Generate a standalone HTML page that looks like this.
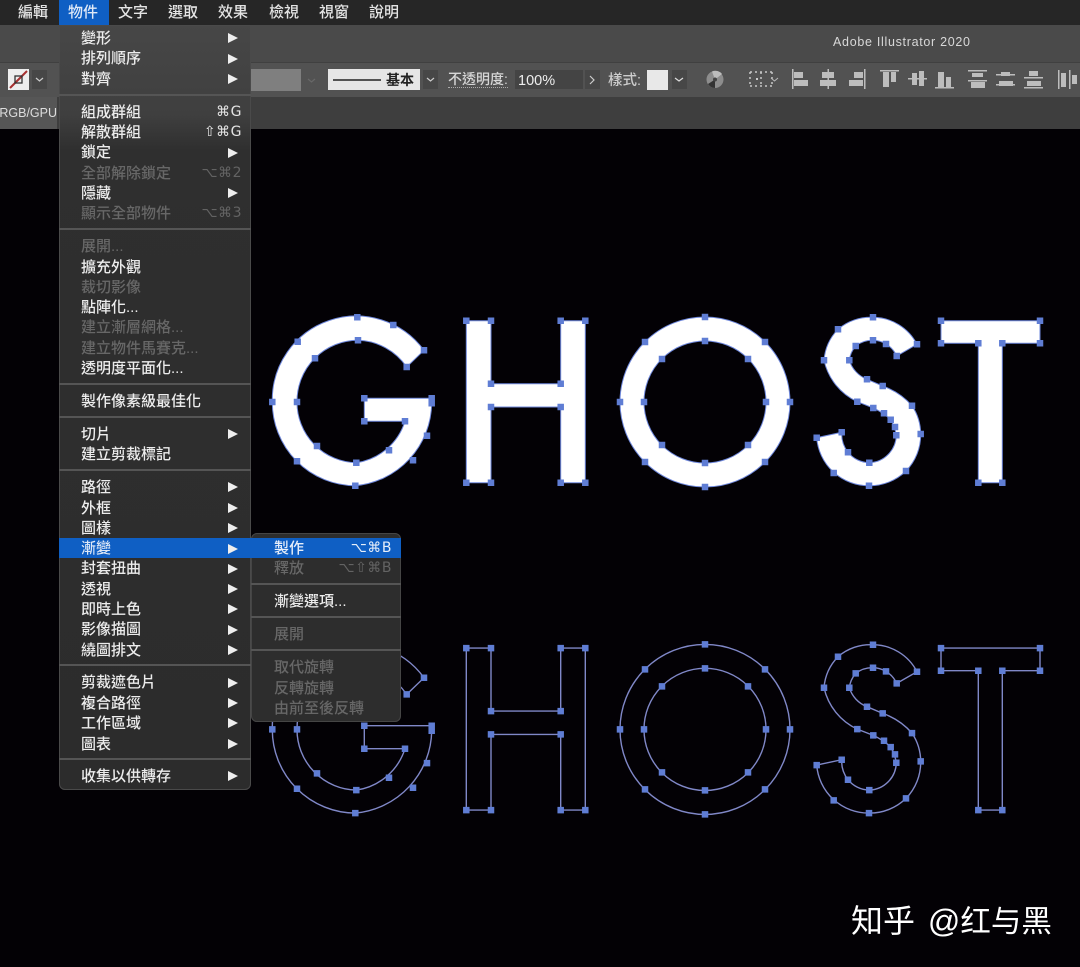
<!DOCTYPE html>
<html lang="zh-Hant"><head><meta charset="utf-8"><title>Adobe Illustrator 2020</title>
<style>
html,body{margin:0;padding:0;background:#030105}
#p{position:relative;width:1080px;height:967px;overflow:hidden;background:#030105;font-family:"Liberation Sans","Noto Sans CJK TC",sans-serif;color:#eee}
#p div{position:absolute}
.m{top:3px;height:20px;line-height:20px;font-size:15px;color:#e4e4e4;white-space:nowrap;font-weight:500}
.r{left:22px;height:20px;line-height:20px;font-size:15px;color:#ececec;white-space:nowrap;font-weight:500;margin-top:1.5px}
.d{color:#676767}
.s{right:9px;height:20px;line-height:20px;font-size:14px;color:#e4e4e4;white-space:nowrap;font-family:"DejaVu Sans","Liberation Sans",sans-serif;letter-spacing:.5px;margin-top:1px}
.sd{color:#636363}
.a{left:169px;width:0;height:0;border-left:10px solid #eee;border-top:5px solid transparent;border-bottom:5px solid transparent;margin-top:1px}
.l{left:0;right:0;height:2px;background:#555}
</style></head><body><div id="p">

<div style="left:0;top:0;width:1080px;height:25px;background:#262626"></div>
<div style="left:0;top:25px;width:1080px;height:37px;background:#4a4a4a"></div>
<div style="left:0;top:62px;width:1080px;height:35px;background:#525252;border-top:1px solid #404040;box-sizing:border-box"></div>
<div style="left:0;top:97px;width:1080px;height:32px;background:#3e3e3e"></div>
<div style="left:0;top:97px;width:57px;height:32px;background:#565656"></div>
<div style="left:0;top:104px;font-size:12.5px;line-height:18px;color:#ddd;width:57px;overflow:hidden;white-space:nowrap;direction:rtl;text-align:right"><bdi>(RGB/GPU</bdi></div>

<div style="left:59px;top:0;width:50px;height:25px;background:#0f5fc4"></div>
<div class="m" style="left:18px">編輯</div><div class="m" style="left:68px;color:#dfe9f7">物件</div><div class="m" style="left:118px">文字</div><div class="m" style="left:168px">選取</div><div class="m" style="left:218px">效果</div><div class="m" style="left:269px">檢視</div><div class="m" style="left:319px">視窗</div><div class="m" style="left:369px">說明</div>

<div style="left:833px;top:34px;font-size:12.5px;line-height:16px;color:#d8d8d8;letter-spacing:.7px;white-space:nowrap">Adobe Illustrator 2020</div>

<!-- control bar -->
<svg style="position:absolute;left:0;top:62px" width="1080" height="35" viewBox="0 62 1080 35">
<rect x="8" y="69" width="21" height="21" fill="#eee"/>
<path d="M10 88L27 71" stroke="#a83030" stroke-width="2"/><rect x="15" y="76" width="7" height="7" fill="none" stroke="#333" stroke-width="1.3"/>
<rect x="32" y="70" width="15" height="19" fill="#474747"/><path d="M36 78l3.500 3 3.500-3" fill="none" stroke="#ccc" stroke-width="1.200"/>
<rect x="251" y="69" width="50" height="22" fill="#7f7f7f"/>
<path d="M308 79l3.500 3 3.500-3" fill="none" stroke="#686868" stroke-width="1.200"/>
<rect x="328" y="69" width="92" height="21" fill="#e6e6e6"/><path d="M333 80H381" stroke="#222" stroke-width="1.500"/>
<rect x="423" y="70" width="15" height="19" fill="#474747"/><path d="M427 78l3.500 3 3.500-3" fill="none" stroke="#ccc" stroke-width="1.200"/>
<rect x="515" y="70" width="68" height="19" fill="#444"/>
<rect x="585" y="70" width="15" height="19" fill="#474747"/><path d="M590 76l4 4-4 4" fill="none" stroke="#ccc" stroke-width="1.200"/>
<rect x="647" y="70" width="21" height="20" fill="#e8e8e8"/>
<rect x="672" y="70" width="15" height="19" fill="#474747"/><path d="M675 78l4 3 4-3" fill="none" stroke="#ddd" stroke-width="1.200"/>
<circle cx="715" cy="79.500" r="8.500" fill="#8d8d8d"/><path d="M715 79.500L708 84A8.500 8.500 0 0 0 715 88Z" fill="#333"/><path d="M715 79.500L722 74A8.500 8.500 0 0 0 712 71.500Z" fill="#bdbdbd"/><circle cx="715" cy="79.500" r="2" fill="#444"/>
<path d="M750 72h22M750 86h22M750 72v14M761 72v14M772 72v14" stroke="#c8c8c8" stroke-width="1.500" stroke-dasharray="2 3" fill="none"/><rect x="756" y="78" width="2" height="2" fill="#ccc"/>
<path d="M771 78l3.500 3 3.500-3" fill="none" stroke="#bbb" stroke-width="1"/>
<g fill="#bdbdbd">
<rect x="792" y="69" width="1.500" height="20"/><rect x="794" y="72" width="9" height="6"/><rect x="794" y="80" width="14" height="6"/>
<rect x="827.500" y="69" width="1.500" height="20"/><rect x="822" y="72" width="12" height="6"/><rect x="820" y="80" width="16" height="6"/>
<rect x="864" y="69" width="1.500" height="20"/><rect x="854" y="72" width="9" height="6"/><rect x="849" y="80" width="14" height="6"/>
<rect x="880" y="70" width="19" height="1.500"/><rect x="883" y="72" width="6" height="15"/><rect x="891" y="72" width="5" height="10"/>
<rect x="908" y="78" width="19" height="1.500"/><rect x="912" y="73" width="5" height="12"/><rect x="919" y="71" width="5" height="15"/>
<rect x="935" y="87" width="19" height="1.500"/><rect x="938" y="72" width="6" height="15"/><rect x="946" y="77" width="5" height="10"/>
<rect x="968" y="70" width="19" height="1.500"/><rect x="972" y="73" width="11" height="4"/><rect x="968" y="80" width="19" height="1.500"/><rect x="971" y="82" width="14" height="6"/>
<rect x="996" y="74" width="19" height="1.500"/><rect x="1001" y="72" width="9" height="4"/><rect x="996" y="84" width="19" height="1.500"/><rect x="999" y="81" width="14" height="5"/>
<rect x="1024" y="77" width="19" height="1.500"/><rect x="1029" y="71" width="9" height="5"/><rect x="1024" y="87" width="19" height="1.500"/><rect x="1027" y="81" width="14" height="5"/>
<rect x="1058" y="70" width="1.500" height="19"/><rect x="1061" y="73" width="5" height="14"/><rect x="1069" y="70" width="1.500" height="19"/><rect x="1072" y="75" width="5" height="9"/>
</g>
</svg>
<div style="left:386px;top:70px;font-size:14px;line-height:20px;color:#222;font-weight:700">基本</div>
<div style="left:448px;top:69px;font-size:14px;line-height:20px;color:#d6d6d6;font-weight:500;border-bottom:1px dotted #aaa;height:18px;white-space:nowrap">不透明度:</div>
<div style="left:518px;top:72px;font-size:14.500px;line-height:19px;color:#eee;font-weight:500">100%</div>
<div style="left:608px;top:71px;font-size:14.500px;line-height:20px;color:#ccc;font-weight:500;white-space:nowrap">樣式:</div>

<!-- artwork -->
<svg style="position:absolute;left:0;top:0" width="1080" height="967" viewBox="0 0 1080 967">
<defs>
<path id="G" d="M424 350.300A84 84 0 0 0 272.300 402A83.500 83.500 0 0 0 355.300 485.700A84 84 0 0 0 431.700 403.300V398.300H364.300V421.300H405A60 60 0 0 1 356.300 462.700A60.500 60.500 0 0 1 297 402A61 61 0 0 1 358 340.300A61 61 0 0 1 406.700 367Z"/>
<path id="H" d="M466.300 320.700H491V383.700H560.700V320.700H585.300V482.700H560.700V407H491V482.700H466.300Z"/>
<path id="O" fill-rule="evenodd" d="M620 402A85 85 0 1 0 790 402A85 85 0 1 0 620 402ZM644 402A61 61 0 1 1 766 402A61 61 0 1 1 644 402Z"/>
<path id="S" d="M917 344.300A50 50 0 0 0 873 317.300A50 50 0 0 0 838 329.300A50 50 0 0 0 824 360.300A60 60 0 0 0 857.300 401.700L873.300 408Q884 413 890.700 419.700Q895 427 896.300 435.300A28 28 0 0 1 869.300 462.700A28 28 0 0 1 848 452.300A30 30 0 0 1 841.700 432.300L816.700 437.700A52 52 0 0 0 869 485.700A52 52 0 0 0 906 471A52 52 0 0 0 920.700 434A52 52 0 0 0 912 405.700A70 70 0 0 0 882.700 386L867 379.300A30 30 0 0 1 849.300 360.300A27 27 0 0 1 855.700 346A27 27 0 0 1 873 340.300A27 27 0 0 1 886 344A27 27 0 0 1 896.700 356Z"/>
<path id="T" d="M941 320.700H1040V343.300H1002.300V482.700H978.300V343.300H941Z"/>
<path id="K" fill="none" stroke="#5f7dd4" stroke-width="6.500" stroke-linecap="square" d="M424 350.300h0M393.300 325h0M357.300 317.300h0M297.700 341.700h0M272.300 402h0M297 461.300h0M355.300 485.700h0M413 460.300h0M427 435.700h0M431.700 403.300h0M431.700 398.300h0M364.300 398.300h0M364.300 421.300h0M405 421.300h0M389 450.300h0M356.300 462.700h0M317 446h0M297 402h0M315 358.300h0M358 340.300h0M406.700 367h0
M466.300 320.700h0M491 320.700h0M491 383.700h0M560.700 383.700h0M560.700 320.700h0M585.300 320.700h0M585.300 482.700h0M560.700 482.700h0M560.700 407h0M491 407h0M491 482.700h0M466.300 482.700h0
M620 402h0M645 342h0M705 317h0M765 342h0M790 402h0M765 462h0M705 487h0M645 462h0M644 402h0M662 359h0M705 341h0M748 359h0M766 402h0M748 445h0M705 463h0M662 445h0
M917 344.300h0M873 317.300h0M838 329.300h0M824 360.300h0M857.300 401.700h0M873.300 408h0M884 413.300h0M890.700 419.700h0M895 427h0M896.300 435.300h0M869.300 462.700h0M848 452.300h0M841.700 432.300h0M816.700 437.700h0M833.700 473h0M869 485.700h0M906 471h0M920.700 434h0M912 405.700h0M882.700 386h0M867 379.300h0M849.300 360.300h0M855.700 346h0M873 340.300h0M886 344h0M896.700 356h0
M941 320.700h0M1040 320.700h0M1040 343.300h0M1002.300 343.300h0M1002.300 482.700h0M978.300 482.700h0M978.300 343.300h0M941 343.300h0"/>
<g id="W"><use href="#G"/><use href="#H"/><use href="#O"/><use href="#S"/><use href="#T"/></g>
</defs>
<g fill="#fff" stroke="#6f88dc" stroke-width="1"><use href="#W"/></g>
<use href="#K"/>
<g transform="translate(0 327.400)"><g fill="none" stroke="#8088c8" stroke-width="1.400"><use href="#W"/></g><use href="#K"/></g>
</svg>

<!-- main menu -->
<div style="left:59px;top:25px;width:192px;height:765px;border-radius:0 0 6px 6px;background:linear-gradient(#474747 0,#3f3f3f 90px,#2f2f2f 125px,#2c2c2c 100%);box-shadow:inset 0 0 0 1px #4a4a4a">
<div class="r" style="top:2px">變形</div><div class="a" style="top:7px"></div>
<div class="r" style="top:22.500px">排列順序</div><div class="a" style="top:28px"></div>
<div class="r" style="top:43px">對齊</div><div class="a" style="top:48px"></div>
<div class="l" style="top:69px"></div>
<div class="r" style="top:76px">組成群組</div><div class="s" style="top:76px">⌘G</div>
<div class="r" style="top:96px">解散群組</div><div class="s" style="top:96px">⇧⌘G</div>
<div class="r" style="top:116px">鎖定</div><div class="a" style="top:122px"></div>
<div class="r d" style="top:137px">全部解除鎖定</div><div class="s sd" style="top:137px">⌥⌘2</div>
<div class="r" style="top:157px">隱藏</div><div class="a" style="top:162px"></div>
<div class="r d" style="top:177px">顯示全部物件</div><div class="s sd" style="top:177px">⌥⌘3</div>
<div class="l" style="top:203px"></div>
<div class="r d" style="top:210px">展開...</div>
<div class="r" style="top:231px">擴充外觀</div>
<div class="r d" style="top:251px">裁切影像</div>
<div class="r" style="top:271px">點陣化...</div>
<div class="r d" style="top:291px">建立漸層網格...</div>
<div class="r d" style="top:312px">建立物件馬賽克...</div>
<div class="r" style="top:332px">透明度平面化...</div>
<div class="l" style="top:358px"></div>
<div class="r" style="top:365px">製作像素級最佳化</div>
<div class="l" style="top:391px"></div>
<div class="r" style="top:398px">切片</div><div class="a" style="top:403px"></div>
<div class="r" style="top:418px">建立剪裁標記</div>
<div class="l" style="top:444px"></div>
<div class="r" style="top:451px">路徑</div><div class="a" style="top:456px"></div>
<div class="r" style="top:472px">外框</div><div class="a" style="top:477px"></div>
<div class="r" style="top:492px">圖樣</div><div class="a" style="top:497px"></div>
<div style="left:0;right:0;top:513px;height:20px;background:#0f5fc4"></div>
<div class="r" style="top:512px;color:#dfe9f7">漸變</div><div class="a" style="top:518px"></div>
<div class="r" style="top:532px">封套扭曲</div><div class="a" style="top:538px"></div>
<div class="r" style="top:553px">透視</div><div class="a" style="top:558px"></div>
<div class="r" style="top:573px">即時上色</div><div class="a" style="top:578px"></div>
<div class="r" style="top:593px">影像描圖</div><div class="a" style="top:599px"></div>
<div class="r" style="top:614px">繞圖排文</div><div class="a" style="top:619px"></div>
<div class="l" style="top:639px"></div>
<div class="r" style="top:646px">剪裁遮色片</div><div class="a" style="top:652px"></div>
<div class="r" style="top:667px">複合路徑</div><div class="a" style="top:672px"></div>
<div class="r" style="top:687px">工作區域</div><div class="a" style="top:692px"></div>
<div class="r" style="top:708px">圖表</div><div class="a" style="top:713px"></div>
<div class="l" style="top:733px"></div>
<div class="r" style="top:740px">收集以供轉存</div><div class="a" style="top:745px"></div>
</div>

<!-- submenu -->
<div style="left:251px;top:533px;width:150px;height:189px;border-radius:6px;background:#2d2d2d;box-shadow:inset 0 0 0 1px #454545">
<div style="left:0;right:0;top:5px;height:20px;background:#0f5fc4"></div>
<div class="r" style="left:23px;top:4px;color:#e6eefa">製作</div><div class="s" style="top:4px;color:#e6eefa">⌥⌘B</div>
<div class="r d" style="left:23px;top:24px">釋放</div><div class="s sd" style="top:24px">⌥⇧⌘B</div>
<div class="l" style="top:50px"></div>
<div class="r" style="left:23px;top:57px">漸變選項...</div>
<div class="l" style="top:83px"></div>
<div class="r d" style="left:23px;top:90px">展開</div>
<div class="l" style="top:116px"></div>
<div class="r d" style="left:23px;top:123px">取代旋轉</div>
<div class="r d" style="left:23px;top:144px">反轉旋轉</div>
<div class="r d" style="left:23px;top:164px">由前至後反轉</div>
</div>

<div style="left:851px;top:899px;font-size:32px;line-height:44px;word-spacing:4px;color:#fff;white-space:nowrap;font-family:'Liberation Sans','Noto Sans CJK SC',sans-serif">知乎 @<span style="font-size:30.5px">红与黑</span></div>
</div></body></html>
